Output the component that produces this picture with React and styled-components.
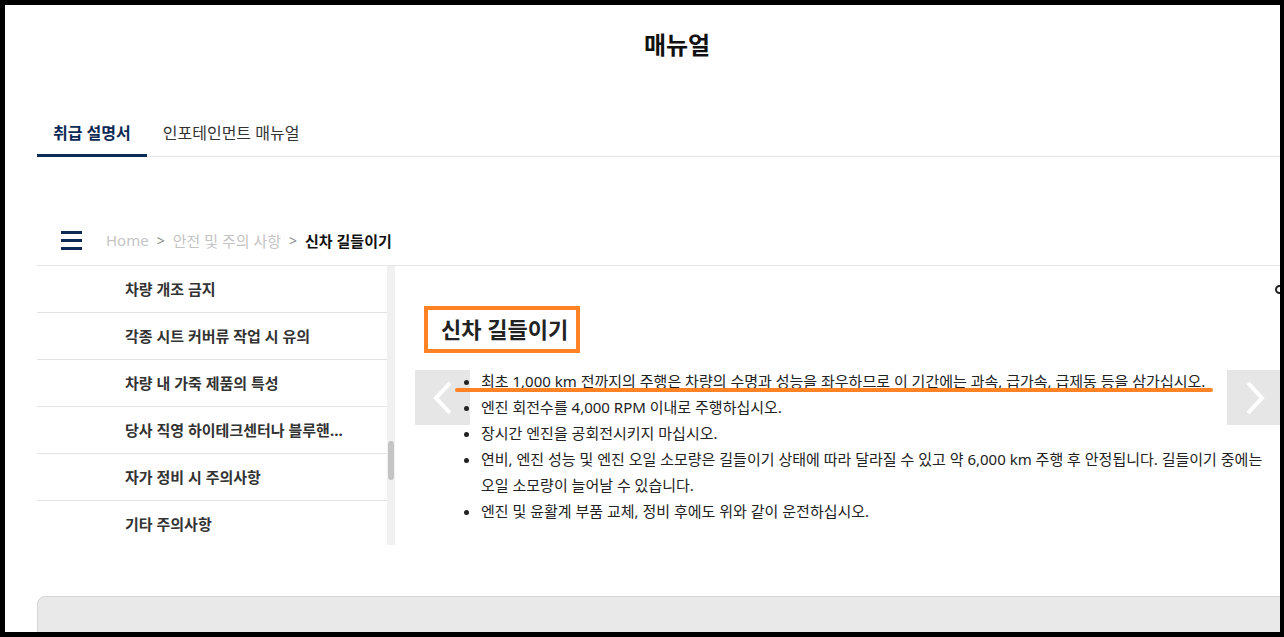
import React from 'react';
import styled, { createGlobalStyle } from 'styled-components';

const GlobalStyle = createGlobalStyle`
  html, body {
    margin: 0;
    padding: 0;
    background: #000;
  }
  body {
    font-family: "Noto Sans", "Noto Sans CJK KR", sans-serif;
    color: #222;
  }
`;

const Frame = styled.div`
  width: 1284px;
  height: 637px;
  padding: 5px 4px 5px 5px;
  box-sizing: border-box;
  background: #000;
`;

const Screen = styled.div`
  width: 100%;
  height: 100%;
  background: #fff;
  overflow: hidden;
`;

const Container = styled.div`
  width: 1280px;
  margin-left: 32px;
`;

const Title = styled.h1`
  margin: 0;
  padding-top: 25px;
  height: 30px;
  line-height: 30px;
  text-align: center;
  font-size: 24px;
  font-weight: 700;
  color: #111;
`;

const Tabs = styled.div`
  display: flex;
  margin-top: 52px;
  border-bottom: 1px solid #e6e6e6;
`;

const Tab = styled.div`
  padding: 0 16px;
  height: 42px;
  line-height: 42px;
  font-size: 16px;
  font-weight: ${(p) => (p.active ? 700 : 400)};
  color: ${(p) => (p.active ? '#0c2a55' : '#333')};
  border-bottom: 3px solid ${(p) => (p.active ? '#0c2a55' : 'transparent')};
  margin-bottom: -1px;
`;

const Crumbs = styled.div`
  display: flex;
  align-items: center;
  margin-top: 58px;
  height: 50px;
  padding-left: 24px;
  border-bottom: 1px solid #e6e6e6;
  font-size: 15px;
`;

const Burger = styled.div`
  display: flex;
  flex-direction: column;
  gap: 5px;
  width: 21px;
  margin-right: 24px;
  span {
    display: block;
    height: 3px;
    background: #0c2a55;
  }
`;

const Crumb = styled.span`
  color: ${(p) => (p.current ? '#111' : '#c4c4c4')};
  font-weight: ${(p) => (p.current ? 700 : 400)};
`;

const Sep = styled.span`
  color: #888;
  margin: 0 8px;
  font-size: 14px;
`;

const Body = styled.div`
  display: flex;
  height: 279px;
`;

const Sidebar = styled.ul`
  list-style: none;
  margin: 0;
  padding: 0;
  width: 350px;
  height: 279px;
  overflow: hidden;
`;

const SideItem = styled.li`
  height: 46px;
  line-height: 46px;
  padding-left: 88px;
  padding-right: 34px;
  border-bottom: 1px solid #e3e3e3;
  font-size: 15px;
  font-weight: 700;
  color: #333;
  white-space: nowrap;
  overflow: hidden;
  text-overflow: ellipsis;
`;

const Track = styled.div`
  width: 8px;
  background: #f1f1f1;
  padding-top: 175px;
  box-sizing: border-box;
`;

const Thumb = styled.div`
  width: 6px;
  height: 39px;
  margin-left: 1px;
  border-radius: 3px;
  background: #c4c4c4;
`;

const Content = styled.div`
  position: relative;
  flex: 1;
  padding: 40px 47px 0 29px;
`;

const HeadBox = styled.h2`
  display: inline-block;
  margin: 0;
  height: 39px;
  line-height: 39px;
  padding: 0 8px 0 13px;
  border: 4px solid #ff8224;
  font-size: 22px;
  font-weight: 700;
  color: #222;
`;

const List = styled.ul`
  position: relative;
  z-index: 1;
  margin: 15px 0 0;
  padding-left: 57px;
  font-size: 15px;
  line-height: 26px;
  color: #222;
`;

const Underline = styled.div`
  position: absolute;
  z-index: 2;
  left: 60px;
  top: 122px;
  width: 758px;
  height: 4px;
  border-radius: 2px;
  background: #ff8224;
`;

const Arrow = styled.div`
  position: absolute;
  z-index: 0;
  top: 104px;
  ${(p) => (p.side === 'left' ? 'left: 20px;' : 'right: 35px;')}
  width: 55px;
  height: 55px;
  background: #e6e6e6;
  display: flex;
  align-items: center;
  justify-content: center;
`;

const Tool = styled.div`
  position: absolute;
  top: 19px;
  right: 33px;
  width: 5px;
  height: 5px;
  border: 2px solid #222;
  border-radius: 50%;
`;

const Footer = styled.div`
  margin-top: 51px;
  height: 60px;
  border: 1px solid #d6d6d6;
  border-radius: 8px 0 0 0;
  background: #e9e9e9;
`;

const Chevron = ({ dir }) => (
  <svg width="22" height="34" viewBox="0 0 22 34">
    <polyline
      points={dir === 'left' ? '18,2 4,17 18,32' : '4,2 18,17 4,32'}
      fill="none"
      stroke="#fff"
      strokeWidth="4"
    />
  </svg>
);

const sideItems = [
  '차량 개조 금지',
  '각종 시트 커버류 작업 시 유의',
  '차량 내 가죽 제품의 특성',
  '당사 직영 하이테크센터나 블루핸즈에서 점검 받으십시오',
  '자가 정비 시 주의사항',
  '기타 주의사항',
];

const bullets = [
  '최초 1,000 km 전까지의 주행은 차량의 수명과 성능을 좌우하므로 이 기간에는 과속, 급가속, 급제동 등을 삼가십시오.',
  '엔진 회전수를 4,000 RPM 이내로 주행하십시오.',
  '장시간 엔진을 공회전시키지 마십시오.',
  '연비, 엔진 성능 및 엔진 오일 소모량은 길들이기 상태에 따라 달라질 수 있고 약 6,000 km 주행 후 안정됩니다. 길들이기 중에는 오일 소모량이 늘어날 수 있습니다.',
  '엔진 및 윤활계 부품 교체, 정비 후에도 위와 같이 운전하십시오.',
];

const App = () => {
  return (
    <>
      <GlobalStyle />
      <Frame>
        <Screen>
          <Container>
            <Title>매뉴얼</Title>
            <Tabs>
              <Tab active>취급 설명서</Tab>
              <Tab>인포테인먼트 매뉴얼</Tab>
            </Tabs>
            <Crumbs>
              <Burger>
                <span />
                <span />
                <span />
              </Burger>
              <Crumb>Home</Crumb>
              <Sep>&gt;</Sep>
              <Crumb>안전 및 주의 사항</Crumb>
              <Sep>&gt;</Sep>
              <Crumb current>신차 길들이기</Crumb>
            </Crumbs>
            <Body>
              <Sidebar>
                {sideItems.map((item) => (
                  <SideItem key={item}>{item}</SideItem>
                ))}
              </Sidebar>
              <Track>
                <Thumb />
              </Track>
              <Content>
                <HeadBox>신차 길들이기</HeadBox>
                <List>
                  {bullets.map((b) => (
                    <li key={b}>{b}</li>
                  ))}
                </List>
                <Underline />
                <Arrow side="left">
                  <Chevron dir="left" />
                </Arrow>
                <Arrow side="right">
                  <Chevron dir="right" />
                </Arrow>
                <Tool />
              </Content>
            </Body>
            <Footer />
          </Container>
        </Screen>
      </Frame>
    </>
  );
};

export default App;
